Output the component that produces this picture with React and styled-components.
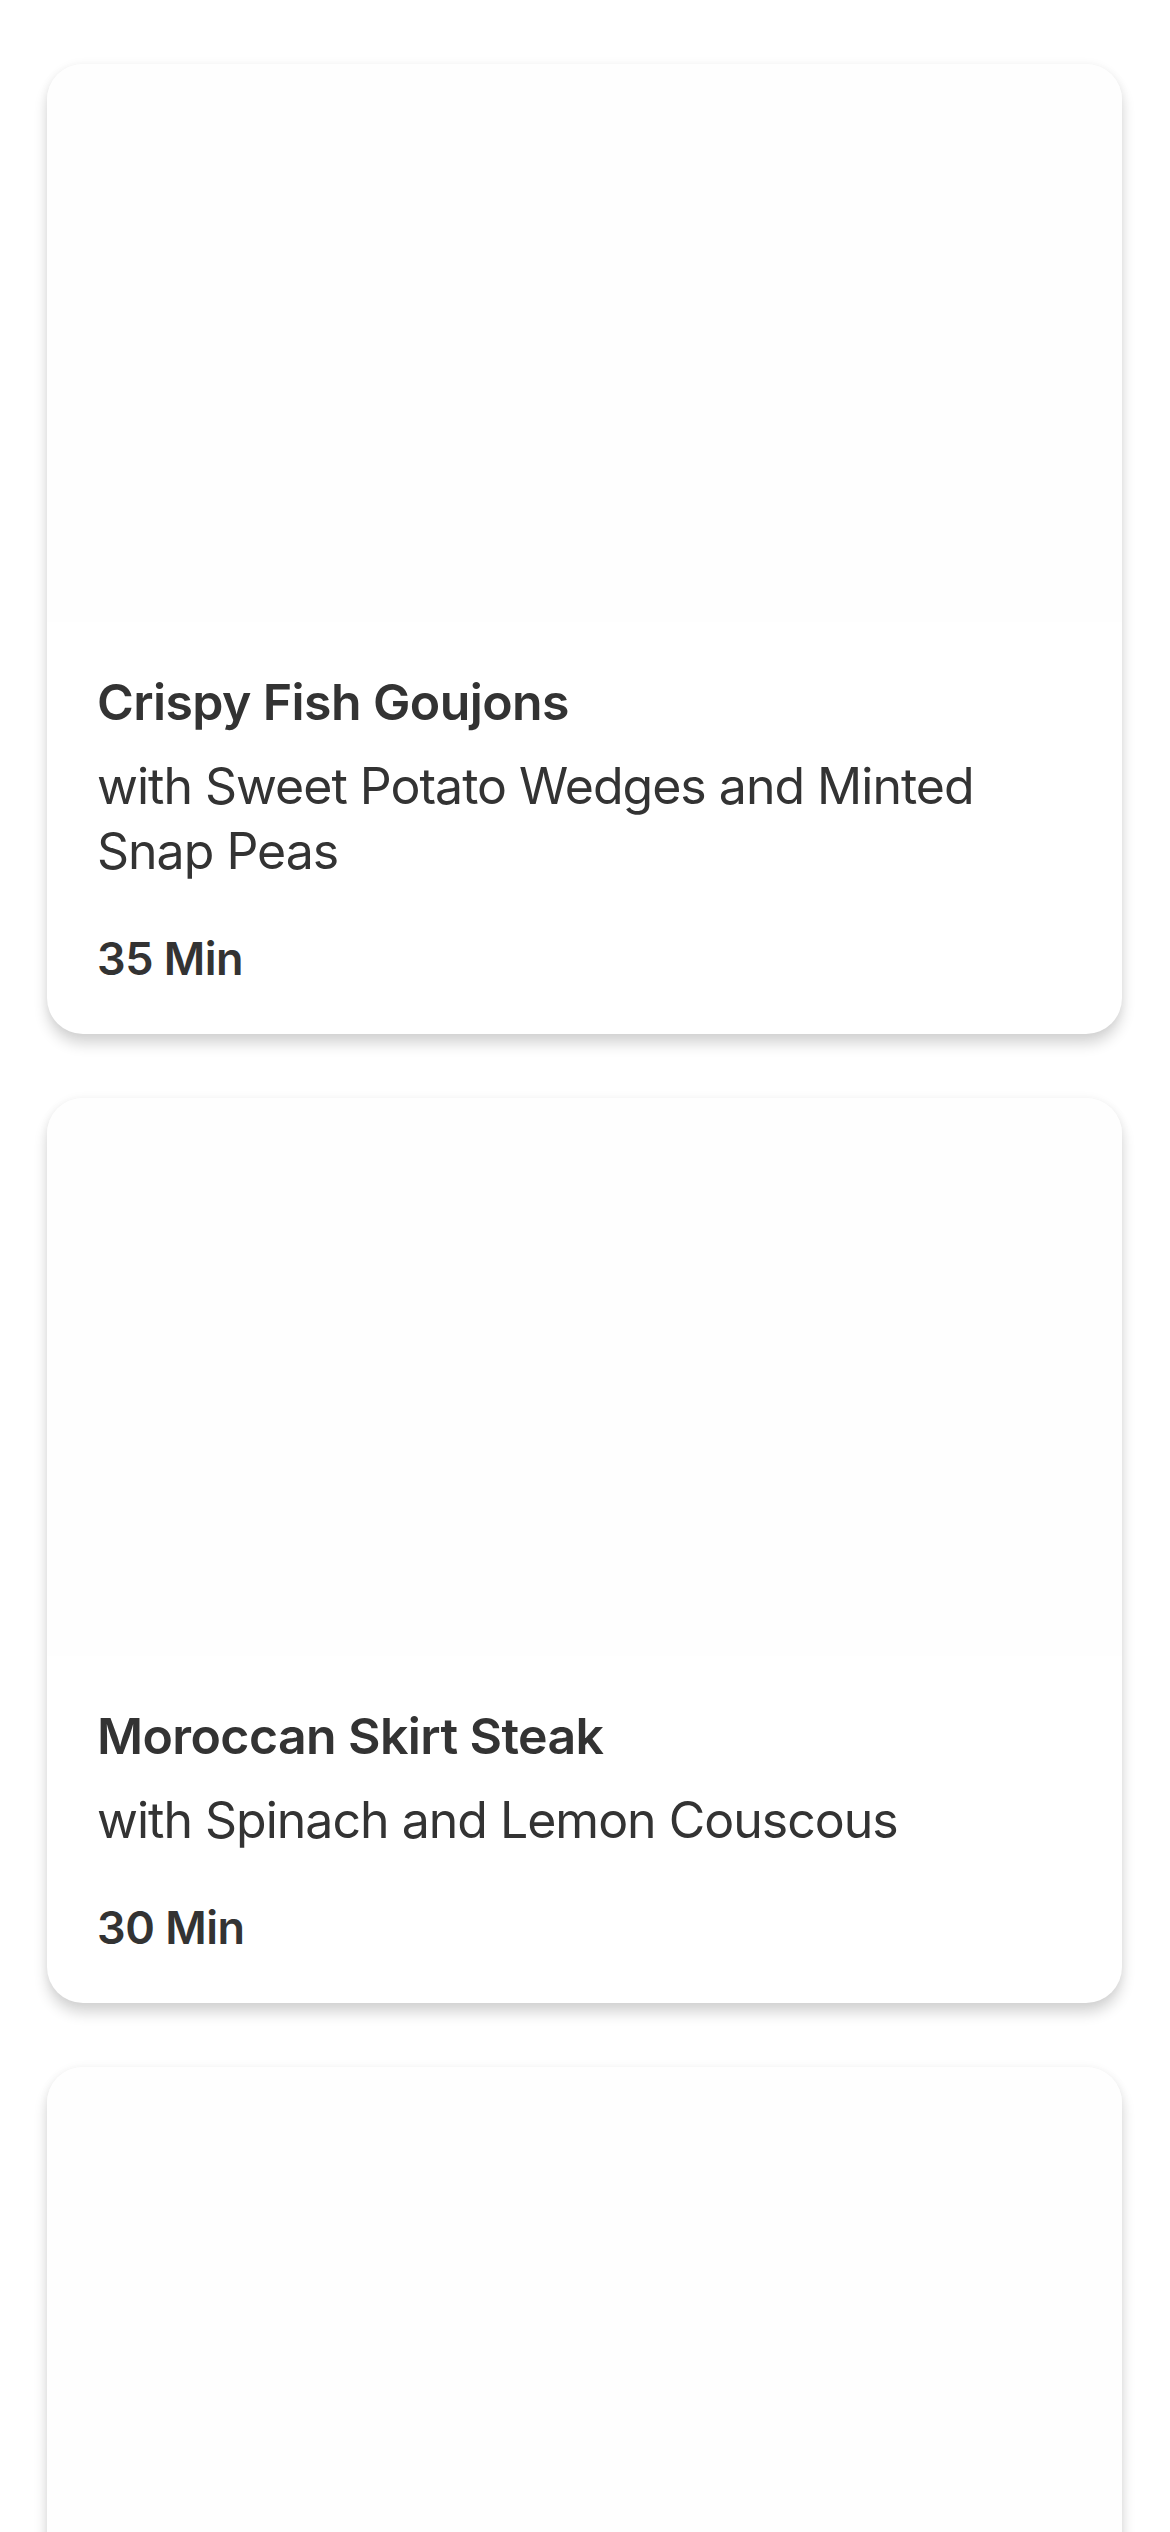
import styled, { createGlobalStyle } from "styled-components";

const GlobalStyle = createGlobalStyle`
    html, body {
        margin: 0;
        padding: 0;
        background: #ffffff;
    }

    body {
        font-family: Inter, "Noto Sans", "Liberation Sans", sans-serif;
        color: #333333;
        -webkit-font-smoothing: antialiased;
    }
`;

const RecipeList = styled.div`
    display: flex;
    flex-direction: column;
    gap: 64px;
    padding: 64px 48px 64px 47px;
`;

const RecipeCard = styled.div`
    display: flex;
    flex-direction: column;
    background: #ffffff;
    border-radius: 36px;
    overflow: hidden;
    box-shadow:
        0 10px 14px rgba(0, 0, 0, 0.16),
        0 0 10px rgba(0, 0, 0, 0.05);
`;

const RecipeImage = styled.div`
    height: ${props => (props.$loading ? "1200px" : "558px")};
    background: #fefefe;
`;

const RecipeBody = styled.div`
    display: flex;
    flex-direction: column;
    padding: 48px 50px 48px 50px;
`;

const RecipeTitle = styled.h2`
    margin: 0;
    font-size: 50px;
    line-height: 64px;
    font-weight: 600;
    letter-spacing: -0.6px;
`;

const RecipeSubtitle = styled.p`
    margin: 20px 0 0;
    font-size: 50px;
    line-height: 65px;
    font-weight: 400;
    letter-spacing: -1px;
    padding-right: 40px;
`;

const RecipeTime = styled.span`
    margin-top: 48px;
    font-size: 45px;
    line-height: 54px;
    font-weight: 600;
    letter-spacing: -0.5px;
`;

const recipes = [
    {
        id: 1,
        title: "Crispy Fish Goujons",
        subtitle: "with Sweet Potato Wedges and Minted Snap Peas",
        time: 35,
    },
    {
        id: 2,
        title: "Moroccan Skirt Steak",
        subtitle: "with Spinach and Lemon Couscous",
        time: 30,
    },
    // still loading, only the picture placeholder shows
    { id: 3 },
];

export default function App() {
    return (
        <>
            <GlobalStyle />
            <RecipeList>
                {recipes.map(recipe => (
                    <RecipeCard key={recipe.id}>
                        <RecipeImage $loading={!recipe.title} />
                        {recipe.title && (
                            <RecipeBody>
                                <RecipeTitle>{recipe.title}</RecipeTitle>
                                <RecipeSubtitle>{recipe.subtitle}</RecipeSubtitle>
                                <RecipeTime>{recipe.time} Min</RecipeTime>
                            </RecipeBody>
                        )}
                    </RecipeCard>
                ))}
            </RecipeList>
        </>
    );
}
